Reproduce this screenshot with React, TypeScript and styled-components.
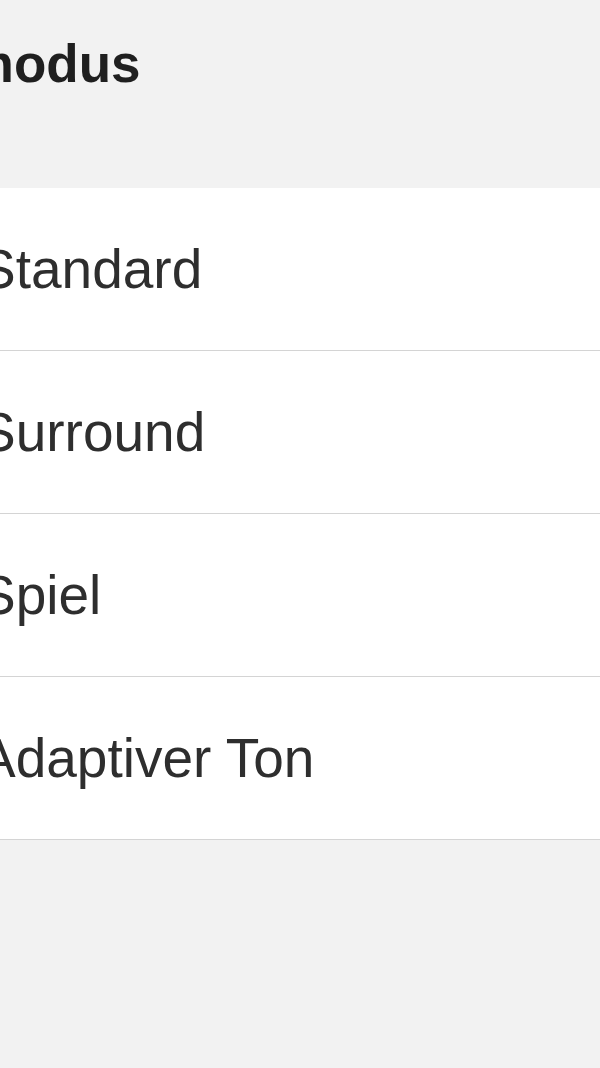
import styled, { createGlobalStyle } from 'styled-components';

const GlobalStyle = createGlobalStyle`
  html, body {
    margin: 0;
    padding: 0;
    background: #f2f2f2;
  }
  body {
    font-family: "Liberation Sans", Arial, sans-serif;
    overflow: hidden;
  }
`;

const MODES = ['Standard', 'Surround', 'Spiel', 'Adaptiver Ton'];

export default function App() {
  return (
    <>
      <GlobalStyle />
      <Screen>
        <Header>
          <Title>Soundmodus</Title>
        </Header>
        <List>
          {MODES.map(mode => (
            <Row key={mode}>
              <Label>{mode}</Label>
            </Row>
          ))}
        </List>
      </Screen>
    </>
  );
}

const Screen = styled.div`
  display: flex;
  flex-direction: column;
  width: 600px;
  height: 1068px;
  overflow: hidden;
  background: #f2f2f2;
`;

const Header = styled.div`
  height: 188px;
  padding-top: 37px;
  box-sizing: border-box;
  white-space: nowrap;
`;

// the view is cropped on the left, so the title starts off screen
const Title = styled.h1`
  margin: 0 0 0 -198px;
  font-size: 53px;
  line-height: 53px;
  font-weight: 700;
  color: #1f1f1f;
`;

const List = styled.div`
  display: flex;
  flex-direction: column;
  background: #ffffff;
`;

const Row = styled.div`
  display: flex;
  align-items: center;
  height: 163px;
  box-sizing: border-box;
  border-bottom: 1.5px solid #d4d4d4;
  white-space: nowrap;
`;

const Label = styled.span`
  margin-left: -21px;
  font-size: 55px;
  line-height: 1;
  color: #2e2e2e;
`;
